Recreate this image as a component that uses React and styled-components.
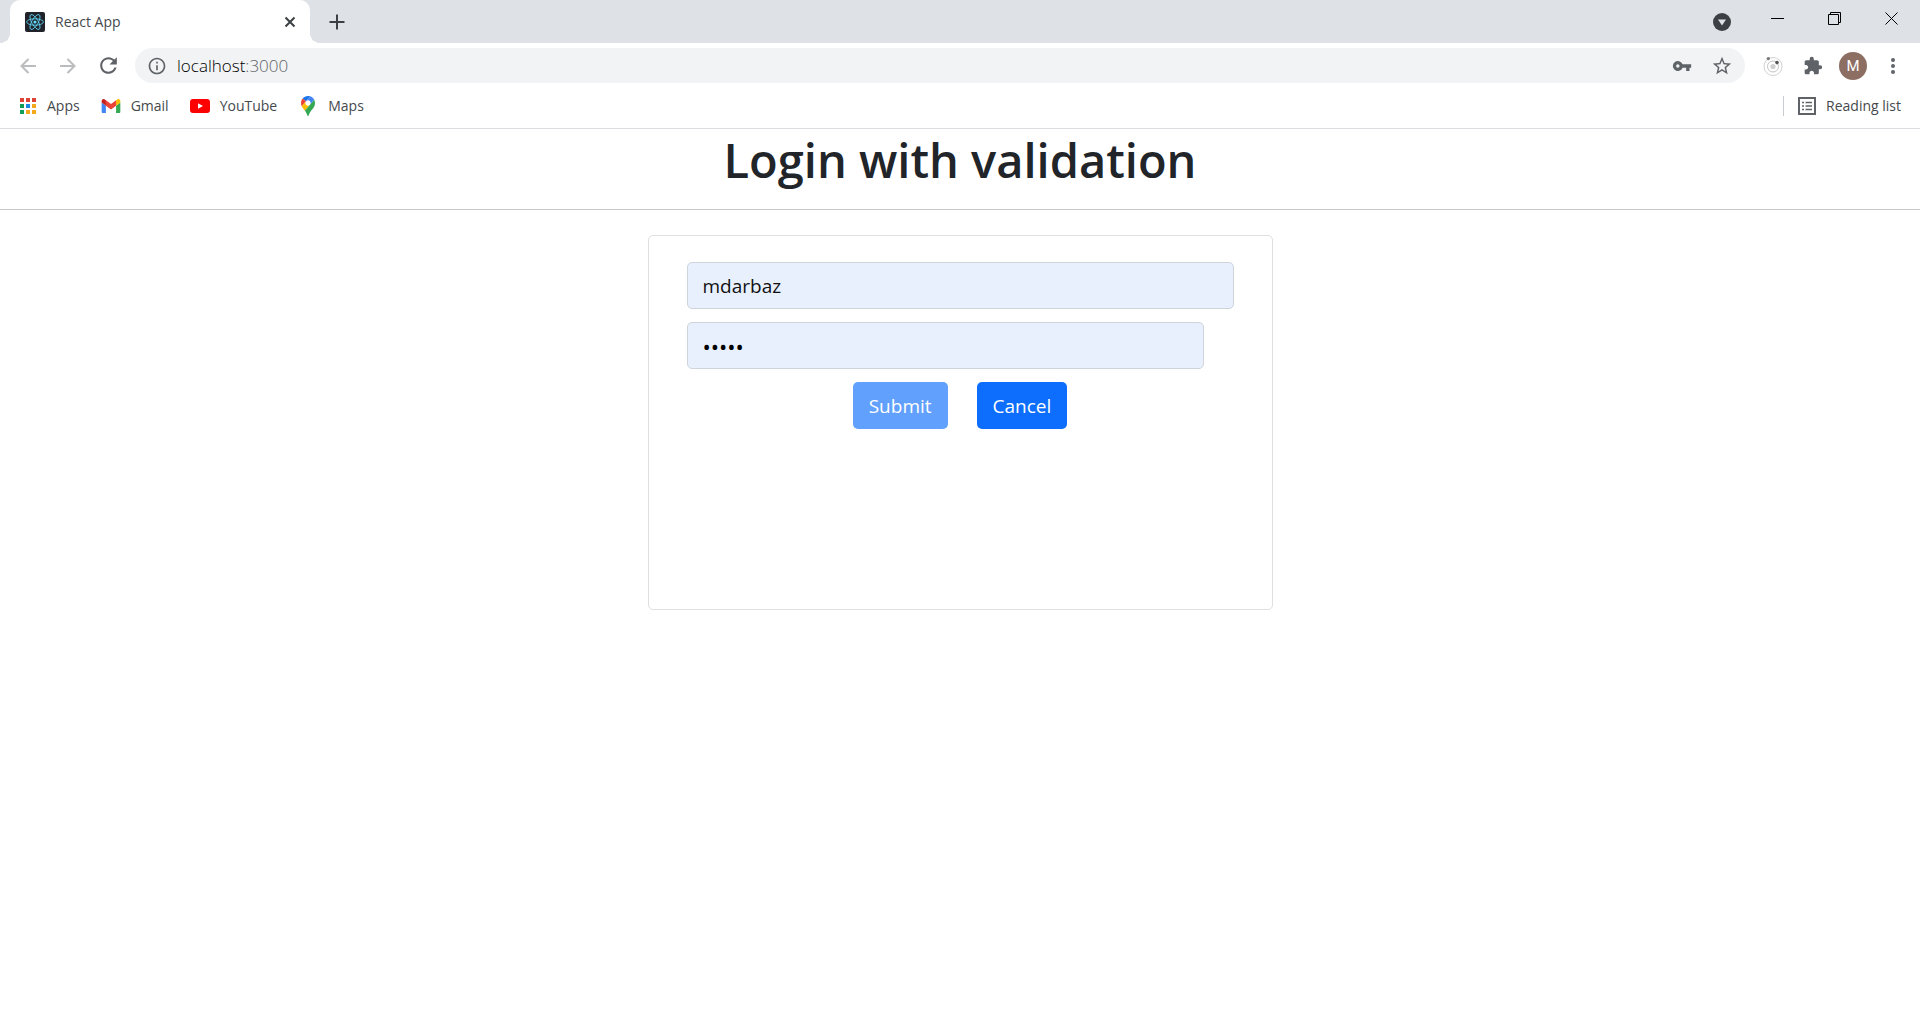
import React, { useState } from "react";
import styled, { createGlobalStyle } from "styled-components";

const GlobalStyle = createGlobalStyle`
  *, *::before, *::after { box-sizing: border-box; }
  body {
    margin: 0;
    background: #fff;
    color: #212529;
    font-family: "Open Sans", "Noto Sans", sans-serif;
  }
  button, input { font: inherit; color: inherit; }
  svg { display: block; flex: none; }
`;

const TabStrip = styled.div`
  display: flex;
  height: 43px;
  padding-left: 10px;
  background: #dee1e6;
`;

const Tab = styled.div`
  position: relative;
  display: flex;
  align-items: center;
  width: 300px;
  padding: 0 14px 0 15px;
  border-radius: 10px 10px 0 0;
  background: #fff;

  &::before, &::after {
    content: "";
    position: absolute;
    bottom: 0;
    width: 10px;
    height: 10px;
  }
  &::before {
    left: -10px;
    background: radial-gradient(circle at 0 0, transparent 10px, #fff 10px);
  }
  &::after {
    right: -10px;
    background: radial-gradient(circle at 100% 0, transparent 10px, #fff 10px);
  }
`;

const TabTitle = styled.span`
  flex: 1;
  margin-left: 10px;
  font-size: 14px;
  line-height: 20px;
  color: #45494d;
`;

const PlainButton = styled.button`
  display: flex;
  align-items: center;
  justify-content: center;
  flex: none;
  width: ${(p) => p.$width || 40}px;
  height: ${(p) => p.$height || 36}px;
  padding: 0;
  border: 0;
  background: transparent;
  color: ${(p) => p.$color || "#5f6368"};
`;

const WindowControls = styled.div`
  display: flex;
  margin-left: auto;
`;

const Toolbar = styled.div`
  display: flex;
  align-items: center;
  height: 45px;
  padding: 0 7px 0 8px;
`;

const AddressBar = styled.div`
  display: flex;
  align-items: center;
  flex: 1;
  height: 35px;
  margin: 0 8px 0 7px;
  padding: 0 3px 0 2px;
  border-radius: 18px;
  background: #f1f3f4;
`;

const AddressText = styled.button`
  flex: 1;
  padding: 0;
  border: 0;
  background: transparent;
  text-align: left;
  font-size: 17px;
  font-weight: 300;
  line-height: 24px;
  color: #5f6368;
`;

const Host = styled.span`
  color: #000;
`;

const Avatar = styled.span`
  display: flex;
  align-items: center;
  justify-content: center;
  width: 28px;
  height: 28px;
  border-radius: 50%;
  background: #8d6e63;
  color: #fff;
  font-family: Roboto, sans-serif;
  font-size: 15px;
`;

const Bookmarks = styled.nav`
  display: flex;
  align-items: center;
  gap: 21px;
  height: 41px;
  padding: 0 19px 5px;
  border-bottom: 1px solid #dadce0;
`;

const Bookmark = styled.a`
  display: flex;
  align-items: center;
  gap: 10px;
  font-size: 14px;
  line-height: 20px;
  color: #45494d;
  text-decoration: none;
`;

const ReadingList = styled(Bookmark)`
  margin-left: auto;
  padding-left: 14px;
  border-left: 1px solid #c8cbcf;
`;

const Heading = styled.h1`
  margin: 0;
  padding: 2px 0 20px;
  border-bottom: 1px solid #c8c9ca;
  text-align: center;
  font-size: 47px;
  font-weight: 600;
  line-height: 58px;
`;

const Card = styled.form`
  display: flex;
  flex-direction: column;
  gap: 13px;
  width: 625px;
  max-width: 100%;
  min-height: 375px;
  margin: 25px auto 0;
  padding: 26px 38px;
  border: 1px solid #dfdfdf;
  border-radius: 5px;
`;

const Field = styled.input`
  width: 100%;
  height: 47px;
  padding: 7px 15px;
  border: 1px solid #ced4da;
  border-radius: 5px;
  outline: 0;
  background: #e8f0fe;
  color: #111;
  font-size: 19px;
  line-height: 30px;
`;

const PasswordField = styled(Field)`
  width: calc(100% - 30px);
  color: #000;
  font-size: 22px;
`;

const Actions = styled.div`
  display: flex;
  justify-content: center;
  gap: 29px;
`;

const ActionButton = styled.button`
  height: 47px;
  padding: 0 16px;
  border: 0;
  border-radius: 5px;
  background: #0d6efd;
  color: #fff;
  font-size: 19px;
  line-height: 30px;
  &:disabled { opacity: 0.65; }
`;

const ReactLogo = () => (
  <svg width="20" height="20" viewBox="0 0 20 20" fill="none">
    <rect width="20" height="20" rx="2" fill="#20232a" />
    <g stroke="#61dafb" strokeWidth="0.8">
      <ellipse cx="10" cy="10" rx="8.4" ry="3.2" />
      <ellipse cx="10" cy="10" rx="8.4" ry="3.2" transform="rotate(60 10 10)" />
      <ellipse cx="10" cy="10" rx="8.4" ry="3.2" transform="rotate(120 10 10)" />
    </g>
    <circle cx="10" cy="10" r="1.6" fill="#61dafb" />
  </svg>
);

const Stroke = ({ size, d, width = 2 }) => (
  <svg width={size} height={size} viewBox={`0 0 ${size} ${size}`} fill="none" stroke="currentColor" strokeWidth={width}>
    <path d={d} />
  </svg>
);

const Filled = ({ size, d }) => (
  <svg width={size} height={size} viewBox="0 0 24 24" fill="currentColor">
    <path d={d} />
  </svg>
);

const SearchTabs = () => (
  <svg width="18" height="18" viewBox="0 0 18 18">
    <circle cx="9" cy="9" r="9" fill="#3c4043" />
    <path d="M5 6.5h8L9 12.5z" fill="#dee1e6" />
  </svg>
);

const OrbitIcon = () => (
  <svg width="20" height="20" viewBox="0 0 20 20" fill="none">
    <circle cx="10" cy="10.5" r="9" stroke="#d2d2d2" />
    <circle cx="10" cy="10.5" r="5.5" stroke="#c4c4c4" />
    <circle cx="10" cy="10.5" r="2.6" fill="#cfcfcf" />
    <circle cx="5.3" cy="2.6" r="1.7" fill="#777" />
    <circle cx="14" cy="6.6" r="1.8" fill="#555" />
  </svg>
);

const AppsIcon = () => {
  const colors = ["#db4437", "#db4437", "#db4437", "#0f9d58", "#1e88e5", "#f4a81d", "#0f9d58", "#f4a81d", "#f4a81d"];
  return (
    <svg width="18" height="18" viewBox="0 0 18 18">
      {colors.map((c, i) => (
        <rect key={i} x={1 + (i % 3) * 6} y={1 + Math.floor(i / 3) * 6} width="4" height="4" fill={c} />
      ))}
    </svg>
  );
};

const GmailIcon = () => (
  <svg width="20" height="14" viewBox="52 42 88 66">
    <path fill="#4285f4" d="M58 108h14V74L52 59v43c0 3.3 2.7 6 6 6" />
    <path fill="#34a853" d="M120 108h14c3.3 0 6-2.7 6-6V59l-20 15" />
    <path fill="#fbbc04" d="M120 48v26l20-15v-8c0-7.4-8.5-11.6-14.4-7.2" />
    <path fill="#ea4335" d="M72 74V48l24 18 24-18v26L96 92" />
    <path fill="#c5221f" d="M52 51v8l20 15V48l-5.6-4.2C60.5 39.4 52 43.6 52 51" />
  </svg>
);

const YouTubeIcon = () => (
  <svg width="20" height="14" viewBox="0 0 20 14">
    <rect width="20" height="14" rx="3" fill="#f00" />
    <path d="M8 4.2v5.6L13 7z" fill="#fff" />
  </svg>
);

const MapsIcon = () => (
  <svg width="20" height="20" viewBox="0 0 92.3 132.3">
    <path fill="#1a73e8" d="M60.2 2.2C55.8.8 51 0 46.1 0 32 0 19.3 6.4 10.8 16.5l21.8 18.3z" />
    <path fill="#ea4335" d="M10.8 16.5C4.1 24.5 0 34.9 0 46.1c0 8.7 1.7 15.7 4.6 22l28-33.3z" />
    <path fill="#4285f4" d="M46.2 28.5c9.8 0 17.7 7.9 17.7 17.7 0 4.3-1.6 8.3-4.2 11.4l27.5-32.7C81.6 14.2 71.9 6 60.2 2.2L32.6 34.8c3.3-3.8 8.1-6.3 13.6-6.3" />
    <path fill="#fbbc04" d="M46.2 63.8c-9.8 0-17.7-7.9-17.7-17.7 0-4.3 1.5-8.3 4.1-11.3l-28 33.3c4.8 10.6 12.8 19.2 21 29.9l34.1-40.5c-3.3 3.9-8.1 6.3-13.5 6.3" />
    <path fill="#34a853" d="M59.1 109.2c15.4-24.1 33.3-35 33.3-63 0-7.7-1.9-14.9-5.2-21.3L25.6 98c2.6 3.4 5.3 7.3 7.9 11.3 9.4 14.5 6.8 23.1 12.8 23.1s3.4-8.7 12.8-23.2" />
  </svg>
);

const ReadingIcon = () => (
  <svg width="18" height="18" viewBox="0 0 18 18" fill="none" stroke="#5f6368" strokeWidth="2">
    <rect x="1" y="1" width="16" height="16" />
    <path d="M4 5.5h2M7.5 5.5H14M4 9h2M7.5 9H14M4 12.5h2M7.5 12.5H14" strokeWidth="1.6" />
  </svg>
);

const PATHS = {
  reload: "M17.65 6.35C16.2 4.9 14.21 4 12 4c-4.42 0-7.99 3.58-7.99 8s3.57 8 7.99 8c3.73 0 6.84-2.55 7.73-6h-2.08c-.82 2.33-3.04 4-5.65 4-3.31 0-6-2.69-6-6s2.69-6 6-6c1.66 0 3.14.69 4.22 1.78L13 11h7V4l-2.35 2.35z",
  info: "M11 17h2v-6h-2v6zm1-15C6.48 2 2 6.48 2 12s4.48 10 10 10 10-4.48 10-10S17.52 2 12 2zm0 18c-4.41 0-8-3.59-8-8s3.59-8 8-8 8 3.59 8 8-3.59 8-8 8zM11 9h2V7h-2v2z",
  key: "M12.65 10A6 6 0 1 0 12.65 14H17v4h4v-4h2v-4H12.65zM7 14c-1.1 0-2-.9-2-2s.9-2 2-2 2 .9 2 2-.9 2-2 2z",
  star: "M22 9.24l-7.19-.62L12 2 9.19 8.63 2 9.24l5.46 4.73L5.82 21 12 17.27 18.18 21l-1.63-7.03L22 9.24zM12 15.4l-3.76 2.27 1-4.28-3.32-2.88 4.38-.38L12 6.1l1.71 4.04 4.38.38-3.32 2.88 1 4.28L12 15.4z",
  puzzle: "M20.5 11H19V7c0-1.1-.9-2-2-2h-4V3.5a2.5 2.5 0 0 0-5 0V5H4c-1.1 0-1.99.9-1.99 2v3.8H3.5c1.49 0 2.7 1.21 2.7 2.7s-1.21 2.7-2.7 2.7H2V20c0 1.1.9 2 2 2h3.8v-1.5c0-1.49 1.21-2.7 2.7-2.7 1.49 0 2.7 1.21 2.7 2.7V22H17c1.1 0 2-.9 2-2v-4h1.5a2.5 2.5 0 0 0 0-5z",
  dots: "M12 7.2a2.4 2.4 0 1 0 0-4.8 2.4 2.4 0 0 0 0 4.8zm0 7.2a2.4 2.4 0 1 0 0-4.8 2.4 2.4 0 0 0 0 4.8zm0 7.2a2.4 2.4 0 1 0 0-4.8 2.4 2.4 0 0 0 0 4.8z",
};

function BrowserChrome() {
  return (
    <header>
      <TabStrip>
        <Tab>
          <ReactLogo />
          <TabTitle>React App</TabTitle>
          <PlainButton $width={12} $color="#3c4043" aria-label="Close tab">
            <Stroke size={12} d="M1.5 1.5l9 9M10.5 1.5l-9 9" />
          </PlainButton>
        </Tab>
        <PlainButton $width={54} $height={43} $color="#3c4043" aria-label="New tab">
          <Stroke size={16} d="M8 0.5v15M0.5 8h15" />
        </PlainButton>
        <WindowControls>
          <PlainButton $width={54} $height={43} aria-label="Search tabs"><SearchTabs /></PlainButton>
          <PlainButton $width={57} $color="#000" aria-label="Minimize">
            <Stroke size={13} width={1} d="M0 6.5h13" />
          </PlainButton>
          <PlainButton $width={57} $color="#000" aria-label="Restore">
            <Stroke size={13} width={1} d="M0.5 2.5h10v10h-10zM2.5 2.5v-2h10v10h-2" />
          </PlainButton>
          <PlainButton $width={57} $color="#000" aria-label="Close window">
            <Stroke size={13} width={1} d="M0.5 0.5l12 12M12.5 0.5l-12 12" />
          </PlainButton>
        </WindowControls>
      </TabStrip>
      <Toolbar>
        <PlainButton $color="#babcbe" aria-label="Back">
          <Stroke size={16} d="M16 8H1.5M8.5 1L1.5 8l7 7" />
        </PlainButton>
        <PlainButton $color="#babcbe" aria-label="Forward">
          <Stroke size={16} d="M0 8h14.5M7.5 1l7 7-7 7" />
        </PlainButton>
        <PlainButton aria-label="Reload"><Filled size={25} d={PATHS.reload} /></PlainButton>
        <AddressBar>
          <PlainButton aria-label="Site information"><Filled size={20} d={PATHS.info} /></PlainButton>
          <AddressText type="button"><Host>localhost</Host>:3000</AddressText>
          <PlainButton aria-label="Passwords"><Filled size={20} d={PATHS.key} /></PlainButton>
          <PlainButton aria-label="Bookmark this page"><Filled size={22} d={PATHS.star} /></PlainButton>
        </AddressBar>
        <PlainButton aria-label="Extension"><OrbitIcon /></PlainButton>
        <PlainButton aria-label="Extensions"><Filled size={20} d={PATHS.puzzle} /></PlainButton>
        <PlainButton aria-label="Profile"><Avatar>M</Avatar></PlainButton>
        <PlainButton aria-label="Menu"><Filled size={20} d={PATHS.dots} /></PlainButton>
      </Toolbar>
      <Bookmarks>
        <Bookmark href="#apps"><AppsIcon />Apps</Bookmark>
        <Bookmark href="#gmail"><GmailIcon />Gmail</Bookmark>
        <Bookmark href="#youtube"><YouTubeIcon />YouTube</Bookmark>
        <Bookmark href="#maps"><MapsIcon />Maps</Bookmark>
        <ReadingList href="#reading-list"><ReadingIcon />Reading list</ReadingList>
      </Bookmarks>
    </header>
  );
}

export default function App() {
  const [user, setUser] = useState("mdarbaz");
  const [password, setPassword] = useState("12345");
  return (
    <>
      <GlobalStyle />
      <BrowserChrome />
      <main>
        <Heading>Login with validation</Heading>
        <Card onSubmit={(e) => e.preventDefault()}>
          <Field aria-label="Username" value={user} onChange={(e) => setUser(e.target.value)} />
          <PasswordField
            type="password"
            aria-label="Password"
            value={password}
            onChange={(e) => setPassword(e.target.value)}
          />
          <Actions>
            <ActionButton type="submit" disabled>Submit</ActionButton>
            <ActionButton type="button">Cancel</ActionButton>
          </Actions>
        </Card>
      </main>
    </>
  );
}
